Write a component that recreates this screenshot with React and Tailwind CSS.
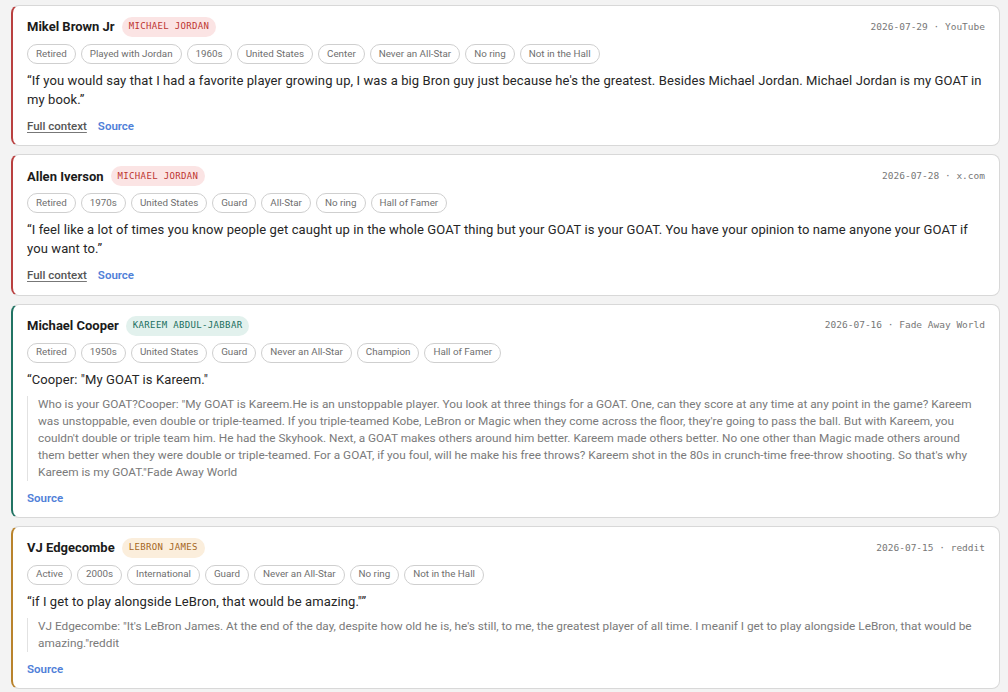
import React from 'react';

const themes = {
  red: {
    bar: 'border-l-[#b94040]',
    badge: 'bg-[#fbe4e4] text-[#bd3530]',
  },
  teal: {
    bar: 'border-l-[#217363]',
    badge: 'bg-[#e2f1ed] text-[#1b6f60]',
  },
  amber: {
    bar: 'border-l-[#b9832c]',
    badge: 'bg-[#fbeedc] text-[#a5661c]',
  },
};

const quotes = [
  {
    name: 'Mikel Brown Jr',
    goat: 'Michael Jordan',
    theme: 'red',
    meta: '2026-07-29 · YouTube',
    tags: ['Retired', 'Played with Jordan', '1960s', 'United States', 'Center', 'Never an All-Star', 'No ring', 'Not in the Hall'],
    quote:
      '“If you would say that I had a favorite player growing up, I was a big Bron guy just because he\'s the greatest. Besides Michael Jordan. Michael Jordan is my GOAT in my book.”',
    fullContext: true,
  },
  {
    name: 'Allen Iverson',
    goat: 'Michael Jordan',
    theme: 'red',
    meta: '2026-07-28 · x.com',
    tags: ['Retired', '1970s', 'United States', 'Guard', 'All-Star', 'No ring', 'Hall of Famer'],
    quote:
      '“I feel like a lot of times you know people get caught up in the whole GOAT thing but your GOAT is your GOAT. You have your opinion to name anyone your GOAT if you want to.”',
    fullContext: true,
  },
  {
    name: 'Michael Cooper',
    goat: 'Kareem Abdul-Jabbar',
    theme: 'teal',
    meta: '2026-07-16 · Fade Away World',
    tags: ['Retired', '1950s', 'United States', 'Guard', 'Never an All-Star', 'Champion', 'Hall of Famer'],
    quote: '“Cooper: "My GOAT is Kareem."',
    context:
      'Who is your GOAT?Cooper: "My GOAT is Kareem.He is an unstoppable player. You look at three things for a GOAT. One, can they score at any time at any point in the game? Kareem was unstoppable, even double or triple-teamed. If you triple-teamed Kobe, LeBron or Magic when they come across the floor, they\'re going to pass the ball. But with Kareem, you couldn\'t double or triple team him. He had the Skyhook. Next, a GOAT makes others around him better. Kareem made others better. No one other than Magic made others around them better when they were double or triple-teamed. For a GOAT, if you foul, will he make his free throws? Kareem shot in the 80s in crunch-time free-throw shooting. So that\'s why Kareem is my GOAT."Fade Away World',
  },
  {
    name: 'VJ Edgecombe',
    goat: 'LeBron James',
    theme: 'amber',
    meta: '2026-07-15 · reddit',
    tags: ['Active', '2000s', 'International', 'Guard', 'Never an All-Star', 'No ring', 'Not in the Hall'],
    quote: '“if I get to play alongside LeBron, that would be amazing."”',
    context:
      'VJ Edgecombe: "It\'s LeBron James. At the end of the day, despite how old he is, he\'s still, to me, the greatest player of all time. I meanif I get to play alongside LeBron, that would be amazing."reddit',
  },
];

function QuoteCard({ q }) {
  const t = themes[q.theme];
  return (
    <div className={`bg-white border border-[#d8d8d8] border-l-2 ${t.bar} rounded-[8px] pl-[14px] pr-[14px] pt-[11px] pb-[10px]`}>
      <div className="flex items-center justify-between h-[20px]">
        <div className="flex items-center gap-[7px]">
          <span className="text-[13px] font-bold text-[#1b1b1b]">{q.name}</span>
          <span
            className={`${t.badge} rounded-full h-[20px] px-[7px] flex items-center uppercase text-[9px] tracking-[0.35px] font-['DejaVu_Sans_Mono',monospace]`}
          >
            {q.goat}
          </span>
        </div>
        <span className="text-[9.5px] text-[#777] font-['DejaVu_Sans_Mono',monospace]">{q.meta}</span>
      </div>

      <div className="flex flex-wrap gap-[5px] mt-[7px]">
        {q.tags.map((tag) => (
          <span
            key={tag}
            className="h-[20px] px-[8px] flex items-center rounded-full border border-[#cfcfcf] text-[9.8px] text-[#6f6f6f]"
          >
            {tag}
          </span>
        ))}
      </div>

      <p className="mt-[7px] text-[13px] leading-[19px] tracking-[0.1px] text-[#262626]">{q.quote}</p>

      {q.context && (
        <blockquote className="mt-[7px] border-l border-[#e2e2e2] pl-[10px] text-[11.8px] leading-[17px] text-[#7a7a7a]">
          {q.context}
        </blockquote>
      )}

      <div className="flex items-center gap-[11px] text-[11.5px] mt-[9px]">
        {q.fullContext && (
          <a className="text-[#555] font-medium underline underline-offset-2 decoration-[#777]">Full context</a>
        )}
        <a className="text-[#4f80d8] font-semibold">Source</a>
      </div>
    </div>
  );
}

export default function App() {
  return (
    <div className="min-h-screen bg-[#f3f3f3] pl-[11px] pr-[8px] pt-[5px] pb-[4px] font-['Roboto',sans-serif]">
      <div className="flex flex-col gap-[8px]">
        {quotes.map((q) => (
          <QuoteCard key={q.name} q={q} />
        ))}
      </div>
    </div>
  );
}
